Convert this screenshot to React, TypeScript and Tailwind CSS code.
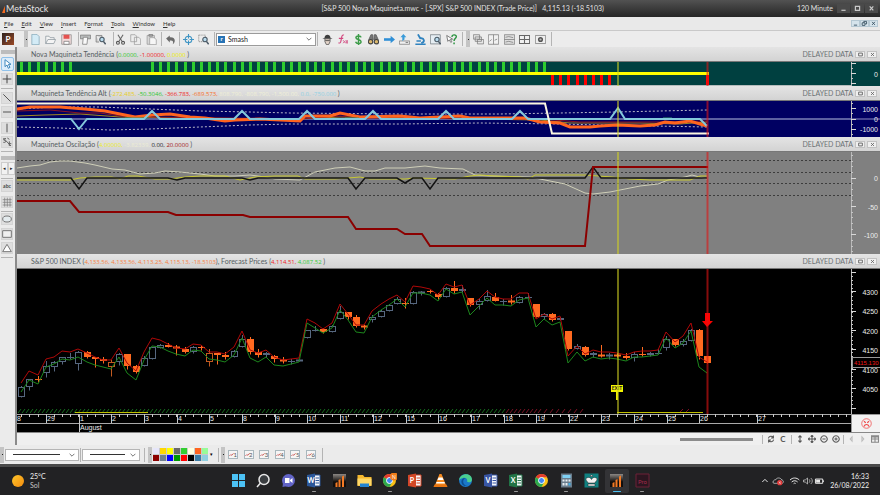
import React from 'react';

type Pt = [number, number];

const STEP = 8.167;
const barX = (i: number) => 21.3 + i * STEP;
const toPoints = (pts: Pt[]) => pts.map((p) => p.join(',')).join(' ');
const range = (from: number, to: number) => Array.from({ length: to - from + 1 }, (_, i) => from + i);

// kind, body top, body bottom, wick top, wick bottom
// b = up bar, f = down bar, h = hollow down bar
type Candle = ['b' | 'f' | 'h', number, number, number, number];

const candles: Candle[] = [
  ['b', 387, 397, 386, 397], ['b', 379, 387, 379, 390], ['f', 379, 379, 376, 382], ['b', 366, 373, 361, 377],
  ['b', 362, 367, 361, 371], ['b', 357, 362, 357, 364], ['b', 357, 357, 353, 359], ['b', 352, 364, 351, 370],
  ['f', 352, 357, 351, 358], ['f', 357, 359, 357, 367], ['f', 359, 361, 357, 363], ['h', 362, 367, 360, 376],
  ['b', 354, 362, 353, 365], ['f', 354, 366, 354, 369], ['f', 366, 372, 365, 373], ['b', 358, 366, 356, 366],
  ['b', 347, 359, 347, 359], ['b', 345, 348, 344, 348], ['f', 345, 347, 343, 347], ['f', 347, 348, 345, 355],
  ['f', 349, 352, 347, 353], ['b', 347, 352, 346, 353], ['f', 347, 347, 345, 350], ['h', 353, 362, 349, 366],
  ['f', 353, 355, 353, 364], ['f', 355, 357, 352, 359], ['b', 351, 357, 350, 357], ['b', 339, 347, 335, 347],
  ['f', 339, 352, 337, 354], ['f', 352, 355, 349, 357], ['b', 353, 355, 352, 357], ['f', 356, 359, 355, 362],
  ['f', 360, 361, 357, 363], ['b', 361, 361, 359, 364], ['b', 360, 361, 359, 361], ['b', 330, 338, 330, 338],
  ['b', 330, 330, 326, 331], ['f', 329, 332, 328, 333], ['b', 326, 332, 325, 332], ['b', 312, 319, 306, 319],
  ['f', 312, 317, 312, 319], ['f', 317, 326, 315, 327], ['f', 326, 327, 325, 329], ['b', 317, 320, 315, 322],
  ['b', 311, 317, 310, 317], ['b', 305, 311, 304, 311], ['b', 299, 304, 297, 304], ['f', 303, 303, 298, 308],
  ['b', 292, 304, 291, 304], ['b', 292, 293, 291, 295], ['f', 291, 291, 290, 293], ['f', 294, 297, 293, 299],
  ['b', 288, 297, 287, 297], ['f', 288, 291, 281, 293], ['b', 289, 291, 285, 292], ['f', 298, 305, 298, 306],
  ['b', 301, 305, 299, 309], ['b', 296, 301, 290, 301], ['f', 297, 301, 293, 301], ['b', 301, 301, 299, 305],
  ['f', 301, 302, 295, 304], ['b', 297, 303, 296, 303], ['b', 297, 297, 293, 298], ['f', 304, 317, 304, 317],
  ['b', 314, 317, 313, 319], ['f', 314, 320, 313, 321], ['b', 318, 320, 317, 320], ['f', 331, 349, 331, 350],
  ['b', 346, 349, 344, 349], ['f', 347, 355, 346, 356], ['b', 353, 355, 352, 357], ['f', 355, 356, 345, 357],
  ['b', 355, 356, 353, 359], ['f', 355, 356, 353, 357], ['f', 356, 358, 353, 359], ['b', 354, 358, 352, 361],
  ['f', 354, 354, 347, 356], ['b', 353, 355, 352, 356], ['b', 353, 353, 349, 354], ['b', 339, 348, 336, 350],
  ['f', 339, 345, 339, 346], ['b', 341, 345, 339, 346], ['b', 330, 341, 329, 341], ['f', 330, 356, 329, 359],
  ['f', 356, 363, 356, 363],
];

const forecastHigh = [
  383, 371, 375, 359, 357, 351, 352, 349, 353, 357, 360, 360, 348, 363, 371, 352, 338, 340, 344, 348, 349, 344, 345,
  352, 352, 354, 347, 331, 350, 353, 350, 357, 360, 359, 358, 319, 323, 329, 323, 304, 314, 325, 325, 311, 304, 299,
  295, 302, 286, 287, 289, 295, 284, 287, 285, 305, 299, 291, 297, 299, 299, 293, 293, 319, 314, 319, 316, 356, 346,
  354, 350, 352, 352, 353, 355, 352, 351, 351, 350, 332, 342, 336, 323, 357, 362,
];

const forecastLow = [
  392, 380, 384, 367, 364, 359, 360, 357, 362, 365, 367, 369, 357, 373, 380, 360, 346, 347, 351, 354, 356, 350, 351,
  359, 360, 362, 355, 338, 358, 362, 357, 365, 366, 364, 362, 323, 328, 333, 328, 310, 320, 332, 333, 317, 310, 305,
  299, 307, 293, 293, 295, 301, 289, 294, 292, 315, 306, 298, 305, 305, 306, 300, 298, 327, 319, 325, 322, 363, 352,
  361, 357, 359, 358, 359, 361, 357, 357, 356, 355, 338, 348, 343, 331, 367, 373,
];

const bars = (ys: number[]): Pt[] => ys.map((y, i) => [Math.round(barX(i)), y]);

const altThick: Pt[] = [
  [17, 109], [30, 107], [60, 107], [85, 109], [105, 111], [120, 114], [135, 117], [152, 115], [170, 114], [190, 117],
  [205, 118], [225, 121], [235, 120], [260, 119], [300, 121], [305, 116], [330, 116], [340, 113], [360, 117],
  [400, 116], [420, 118], [440, 117], [460, 116], [470, 118], [525, 118], [540, 122], [560, 123], [570, 127],
  [590, 127], [600, 126], [617, 125], [640, 126], [655, 125], [665, 122], [675, 123], [690, 121], [700, 124], [707, 126],
];
const altRed: Pt[] = [
  [17, 111], [50, 110], [80, 113], [100, 113], [120, 116], [150, 117], [300, 119], [340, 116], [360, 118], [540, 119],
  [580, 122], [620, 122], [660, 122], [707, 121],
];
const altGold: Pt[] = [
  [17, 116], [45, 115], [80, 114], [120, 117], [180, 118], [300, 119], [340, 117], [540, 120], [570, 123], [640, 123],
  [680, 124], [707, 122],
];
const altUpper: Pt[] = [
  [17, 109], [55, 107], [100, 107], [150, 109], [200, 111], [250, 112], [290, 113], [400, 114], [500, 114], [560, 113],
  [617, 112], [660, 111], [707, 110],
];
const altLower: Pt[] = [
  [17, 127], [60, 128], [110, 130], [150, 129], [200, 127], [250, 125], [290, 124], [400, 124], [480, 123], [560, 124],
  [600, 125], [707, 127],
];
const altPeaks = [152, 242, 307, 373, 446, 520];
const altSignal: Pt[] = [
  [17, 119], [71, 119], [79, 129], [87, 119],
  ...altPeaks.flatMap((x): Pt[] => [[x - 8, 119], [x, 111], [x + 8, 119]]),
  [610, 119], [618, 108], [625, 119], [700, 119], [707, 126],
];

const oscCream: Pt[] = [
  [17, 168], [30, 166], [40, 165], [50, 162], [60, 161], [70, 161], [85, 163], [95, 165], [112, 169], [125, 170],
  [140, 174], [155, 173], [165, 171], [180, 172], [200, 174], [215, 176], [235, 176], [250, 175], [265, 177],
  [275, 179], [300, 180], [315, 172], [335, 168], [350, 167], [365, 171], [375, 171], [385, 168], [405, 168],
  [425, 166], [440, 168], [463, 169], [475, 175], [490, 176], [530, 177], [550, 181], [565, 184], [585, 193],
  [593, 194], [610, 192], [625, 189], [640, 186], [658, 184], [668, 180], [685, 177], [692, 175], [707, 179],
];
const oscYellow: Pt[] = [
  [17, 180], [70, 180], [80, 178], [95, 177], [112, 177], [120, 179], [128, 176], [138, 176], [155, 179], [170, 179],
  [185, 177], [200, 176], [225, 176], [240, 180], [255, 177], [275, 176], [298, 176], [305, 179], [320, 179],
  [335, 179], [348, 178], [360, 177], [370, 179], [405, 179], [415, 178], [455, 179], [470, 176], [480, 175],
  [495, 176], [520, 177], [528, 179], [535, 175], [585, 175], [612, 177], [630, 179], [650, 180], [690, 180],
  [700, 176], [707, 176],
];
const oscBlack: Pt[] = [
  [17, 178], [71, 178], [79, 189], [87, 178], [168, 178], [177, 180], [185, 178], [242, 178], [250, 180], [258, 178],
  [348, 178], [356, 189], [365, 178], [397, 178], [405, 183], [413, 178], [422, 178], [430, 189], [438, 178],
  [585, 178], [593, 167], [601, 178], [707, 178],
];
const oscRed: Pt[] = [
  [17, 201], [70, 201], [79, 212], [168, 212], [176, 215], [243, 215], [250, 217], [348, 217], [356, 229], [397, 229],
  [405, 234], [422, 234], [430, 246], [585, 246], [593, 167], [708, 167],
];

const dates: [number, string][] = [
  [46, '29'], [79, '1'], [111, '2'], [144, '3'], [177, '4'], [209, '5'], [242, '8'], [275, '9'], [307, '10'],
  [340, '11'], [373, '12'], [406, '15'], [438, '16'], [471, '17'], [504, '18'], [536, '19'], [569, '22'], [601, '23'],
  [634, '24'], [667, '25'], [699, '26'], [757, '27'],
];

const menus = ['File', 'Edit', 'View', 'Insert', 'Format', 'Tools', 'Window', 'Help'];

/* ---------- icons, drawn on a 30 unit grid ---------- */

function Icon({ children, className = 'w-[10px] h-[10px]' }: { children: React.ReactNode; className?: string }) {
  return (
    <svg viewBox="0 0 30 30" className={className} fill="none" stroke="#777" strokeWidth="2" aria-hidden="true">
      {children}
    </svg>
  );
}

const lens = (
  <>
    <circle cx="19" cy="15" r="6" fill="#b9dcef" stroke="#4b5a66" strokeWidth="3" />
    <path d="M23 20l6 8" stroke="#4b5a66" strokeWidth="4" />
  </>
);

const fileIcons = {
  New: <path d="M5 1h14l6 6v22H5z" fill="#d3ebf6" stroke="#7fa3b5" />,
  Open: <path d="M2 26V6h9l3 4h11v5M2 26l6-11h21l-5 11z" fill="#f4f4f4" stroke="#8a969c" />,
  Save: (
    <>
      <path d="M2 2h26v26H2z" fill="#f1dada" stroke="#8d8d8d" />
      <path d="M7 2h16v11H7z" fill="#e4524f" stroke="none" />
      <path d="M8 20h14v8H8z" fill="#fff" />
    </>
  ),
};
const printIcons = {
  Print: (
    <>
      <path d="M1 3h28v10H1z" fill="#b9bcbc" />
      <path d="M9 9h12l-2 19H7z" fill="#fafafa" />
    </>
  ),
  'Print preview': (
    <>
      <path d="M3 4h16v8M3 4v18h8" fill="#d0d0d0" />
      {lens}
    </>
  ),
};
const editIcons = {
  Cut: (
    <>
      <path d="M8 2l11 18M22 2L11 20" stroke="#666" strokeWidth="3" />
      <circle cx="8" cy="24" r="4" stroke="#555" strokeWidth="3" />
      <circle cx="22" cy="24" r="4" stroke="#555" strokeWidth="3" />
    </>
  ),
  Copy: <path d="M2 2h12l4 4v15H2zM12 9h12l5 5v15H12z" fill="#ededed" stroke="#999" />,
  Paste: (
    <>
      <path d="M3 4h20v24H3z" fill="#d7d7d7" stroke="#999" />
      <path d="M8 1h10v5H8z" fill="#aaa" />
      <path d="M10 10h12l6 5v14H10z" fill="#f6f6f6" stroke="#999" />
    </>
  ),
};
const undoIcons = {
  Undo: <path d="M3 12L13 4v5c16-2 17 14 8 19 3-7 1-11-8-10v5z" fill="#6b6b6b" stroke="none" />,
};
const zoomIcons = {
  Crosshair: (
    <>
      <circle cx="15" cy="15" r="9" stroke="#3e94c4" strokeWidth="3" />
      <path d="M15 0v12M15 18v12M0 15h12M18 15h12" stroke="#3e94c4" strokeWidth="3" />
    </>
  ),
  'Zoom box': (
    <>
      <path d="M2 3h18v18H2z" strokeDasharray="3 2" />
      {lens}
    </>
  ),
};
const powerIcons = {
  Expert: (
    <>
      <path d="M7 10C7-1 23-1 23 10l6 3H1z" fill="#3d3d3d" stroke="none" />
      <path d="M8 13h14v8l-4 8h-6l-4-8z" fill="#e2d3c8" stroke="#444" />
      <path d="M9 18h12" stroke="#333" />
    </>
  ),
  Indicators: (
    <>
      <path d="M19 3c-5-2-6 3-7 9-1 8-2 15-8 12M5 12h12" stroke="#d2487f" strokeWidth="3" />
      <path d="M16 18c3-3 5 9 8 6M24 18l-8 7M26 18h3v7h-3z" stroke="#d2487f" strokeWidth="2" />
    </>
  ),
  System: (
    <path d="M22 9C21 4 8 4 8 10s14 4 14 11-13 6-15 0M15 0v30" stroke="#3d9c49" strokeWidth="4" />
  ),
  Explorer: (
    <>
      <path d="M8 2h5l1 14H2zM17 2h5l6 14H16z" fill="#777" stroke="#555" />
      <circle cx="7" cy="21" r="6" fill="#dcb96d" stroke="#444" strokeWidth="3" />
      <circle cx="23" cy="21" r="6" fill="#dcb96d" stroke="#444" strokeWidth="3" />
    </>
  ),
  Forecast: (
    <>
      <path d="M0 15h20" stroke="#2f8fd6" strokeWidth="7" />
      <path d="M18 5l12 10-12 10z" fill="#2f8fd6" stroke="none" />
    </>
  ),
  Import: (
    <>
      <path d="M1 19h28v9H1z" fill="#f1f1f1" />
      <path d="M18 23h7" stroke="#555" />
      <path d="M9 19V9H4l8-9 8 9h-5v6z" fill="#3a9bd9" stroke="none" />
    </>
  ),
  Optimise: (
    <>
      <path d="M8 1l7 12M14 12c12-2 14 10 3 13" stroke="#3083bf" strokeWidth="5" />
      <path d="M1 28h28M4 19h12" stroke="#3083bf" strokeWidth="4" />
    </>
  ),
  Inspect: (
    <>
      <path d="M1 2h27v25H1z" fill="#e6eef3" stroke="#6d767b" />
      {lens}
    </>
  ),
  Help: (
    <>
      <path d="M2 4l3 16 4-4 4 7 3-2-4-6 6-1z" fill="#fff" stroke="#555" />
      <path d="M16 8c1-8 13-7 12 0-1 5-6 4-6 11M22 23v5" stroke="#2e9443" strokeWidth="4" />
    </>
  ),
};
const tileIcons = {
  Cascade: <path d="M1 2h17v12H1zM6 8h17v12H6zM12 15h17v12H12z" fill="#e7e7e7" stroke="#777" />,
  'Tile columns': <path d="M1 2h28v26H1zM15 2v26M4 20l6-5M18 17l7-3" fill="#f1f1f1" stroke="#777" />,
  'Tile rows': <path d="M1 2h28v26H1zM1 15h28M4 9l9-2 12 3M4 22l9-2 12 3" fill="#dedede" stroke="#777" />,
  'Tile grid': <path d="M1 4h28v22H1zM15 4v22M1 15h28" fill="#f1f1f1" stroke="#666" strokeWidth="3" />,
  'Layout options': (
    <>
      <path d="M1 4h28v22H1z" fill="#eee" stroke="#777" />
      <circle cx="15" cy="15" r="5" fill="#bbb" stroke="#555" strokeWidth="4" />
    </>
  ),
};

function IconGroup({ icons, className }: { icons: Record<string, React.ReactNode>; className: string }) {
  return (
    <div className={`flex shrink-0 items-center justify-between ${className}`}>
      {Object.entries(icons).map(([name, art]) => (
        <button key={name} type="button" aria-label={name} className="flex h-3 w-3 items-center justify-center">
          <Icon className="h-[11px] w-[11px]">{art}</Icon>
        </button>
      ))}
    </div>
  );
}

const Sep = ({ className = 'h-[14px]' }: { className?: string }) => (
  <div className={`w-px shrink-0 bg-[#b4b4b4] ${className}`} />
);
const Grip = ({ className = '' }: { className?: string }) => (
  <div className={`flex h-4 w-1 shrink-0 items-center justify-center bg-[#c4c4c4] ${className}`}>
    <div className="h-px w-px bg-[#222]" />
  </div>
);

/* ---------- window frame ---------- */

function TitleBar() {
  return (
    <header className="flex h-[17px] items-center bg-linear-to-b from-[#525252] to-[#262626] pl-[2px] text-[7px] text-[#e2e2e2]">
      <svg viewBox="0 0 12 24" className="h-[8px] w-[4px]" aria-hidden="true">
        <path d="M0 24L9 2v22z" fill="#f26a21" />
      </svg>
      <span className="text-[9px] leading-none">MetaStock</span>
      <h1 className="flex-1 whitespace-pre pl-[80px] text-center">
        [S&amp;P 500 Nova Maquineta.mwc - [.SPX] S&amp;P 500 INDEX (Trade Price)]{'   '}4,115.13 (-18.5103)
      </h1>
      <span>120 Minute</span>
      <div className="ml-1 mr-[2px] flex gap-px">
        {['M8 21h14', 'M8 8h14v13H8z', 'M9 8l12 13M21 8L9 21'].map((d, i) => (
          <button
            key={d}
            type="button"
            aria-label={['Minimise', 'Maximise', 'Close'][i]}
            className="flex h-[9px] w-[13px] items-center justify-center bg-[#4a4a4a]"
          >
            <svg viewBox="0 0 30 30" className="h-[9px] w-[9px]" aria-hidden="true">
              <path d={d} fill="none" stroke="#c9c9c9" strokeWidth="4" />
            </svg>
          </button>
        ))}
      </div>
    </header>
  );
}

function MenuBar() {
  return (
    <nav className="flex h-[13px] items-center justify-between bg-[#e9e9e9] pl-1 pr-[2px] text-[6px] text-[#333]">
      <div className="flex gap-2">
        {menus.map((m) => {
          const at = m === 'Format' ? 1 : 0;
          return (
            <button key={m} type="button" className="leading-none">
              {m.slice(0, at)}
              <span className="underline">{m[at]}</span>
              {m.slice(at + 1)}
            </button>
          );
        })}
      </div>
      <div className="flex">
        {['M8 22h14', 'M5 12h12v11H5zM12 12V6h12v11h-6', 'M9 8l12 13M21 8L9 21'].map((d, i) => (
          <button
            key={d}
            type="button"
            aria-label={['Minimise chart', 'Restore chart', 'Close chart'][i]}
            className="flex h-[7px] w-[9px] items-center justify-center border border-[#b5c8d3] bg-[#d5e3eb]"
          >
            <svg viewBox="0 0 30 30" className="h-[7px] w-[7px] shrink-0" aria-hidden="true">
              <path d={d} fill="none" stroke="#3c5565" strokeWidth="4" />
            </svg>
          </button>
        ))}
      </div>
    </nav>
  );
}

const Chevron = () => (
  <svg viewBox="0 0 10 10" className="pointer-events-none absolute right-1 top-[3px] h-[6px] w-[6px]" aria-hidden="true">
    <path d="M1 3l4 4 4-4" fill="none" stroke="#666" strokeWidth="1.5" />
  </svg>
);

function Toolbar() {
  return (
    <div className="flex h-[17px] items-center overflow-hidden border-t border-[#c9c9c9] bg-[#ececec]">
      <button type="button" aria-label="Power console" className="ml-[2px] h-3 w-3 shrink-0 bg-linear-to-br from-[#2e211c] to-[#9d4a25] text-[8px] font-bold leading-none text-white">
        P
      </button>
      <Grip className="ml-[10px]" />
      <IconGroup icons={fileIcons} className="ml-px w-[43px]" />
      <Sep className="ml-[6px] h-[14px]" />
      <IconGroup icons={printIcons} className="w-[27px]" />
      <Sep className="ml-[7px] h-[14px]" />
      <IconGroup icons={editIcons} className="w-[43px]" />
      <Sep className="ml-1 h-[14px]" />
      <IconGroup icons={undoIcons} className="ml-[2px] w-3" />
      <Sep className="ml-[3px] h-[14px]" />
      <IconGroup icons={zoomIcons} className="ml-[2px] w-[27px]" />
      <Sep className="ml-[5px] h-[14px]" />
      <div className="relative ml-px h-[13px] w-[100px] shrink-0">
        <select aria-label="Template" className="block h-[13px] w-full appearance-none border border-[#9b9b9b] bg-white py-0 pl-[11px] text-[7px] leading-[11px] text-[#222]">
          <option>Smash</option>
        </select>
        <span className="pointer-events-none absolute left-[2px] top-[3px] flex h-[7px] w-[7px] items-center justify-center bg-[#2773b5] text-[6px] font-bold leading-none text-white">
          r
        </span>
        <Chevron />
      </div>
      <Sep className="ml-px h-[14px]" />
      <IconGroup icons={powerIcons} className="ml-[3px] w-[136px]" />
      <Sep className="ml-[5px] h-[14px]" />
      <Grip className="ml-[3px]" />
      <IconGroup icons={tileIcons} className="ml-[2px] w-[74px]" />
      <Sep className="ml-[5px] h-[14px]" />
    </div>
  );
}

function Tool({ name, children, className = 'mt-1' }: { name: string; children: React.ReactNode; className?: string }) {
  return (
    <button type="button" aria-label={name} className={`flex h-3 w-3 shrink-0 items-center justify-center border border-[#d4d4d4] bg-[#dedede] ${className}`}>
      <Icon>{children}</Icon>
    </button>
  );
}

function SideBar() {
  const rule = <div className="mt-[3px] h-px w-3 shrink-0 bg-[#b4b4b4]" />;
  return (
    <aside className="flex w-[17px] shrink-0 flex-col border-r-2 border-r-[#8a8a8a] bg-[#ebebeb] pl-px">
      <div className="mt-[3px] h-[4px] w-full shrink-0 bg-[#bdbdbd]" />
      <button type="button" aria-label="Select" className="mt-[3px] flex h-[14px] w-[13px] shrink-0 items-center justify-center rounded-xs border border-[#8fc1ea] bg-[#dcedfb]">
        <Icon>
          <path d="M6 2v21l6-5 4 10 5-3-5-9h8z" fill="#fff" stroke="#3f87bd" strokeWidth="3" />
        </Icon>
      </button>
      <Tool name="Pan" className="mt-[2px]"><path d="M15 2v26M2 15h26" stroke="#444" strokeWidth="3" /></Tool>
      {rule}
      <Tool name="Trend line" className="mt-[3px]"><path d="M4 4l22 22" stroke="#555" strokeWidth="3" /></Tool>
      <Tool name="Horizontal line" className="mt-[2px]"><path d="M3 15h24" stroke="#555" strokeWidth="3" /></Tool>
      <Tool name="Vertical line"><path d="M15 2v26" stroke="#555" strokeWidth="3" /></Tool>
      <Tool name="Symbols" className="mt-[2px]">
        <path d="M4 3l23 24M12 5c-8-2-9 5-4 6s4 7-4 5M18 20h10M22 13v14M16 3l6 4" stroke="#666" strokeWidth="3" />
      </Tool>
      {rule}
      <div className="mt-1 h-[4px] w-full shrink-0 bg-[#bdbdbd]" />
      <div className="mt-[2px] flex h-[13px] shrink-0 text-[5px] leading-none text-[#222]">
        <button type="button" aria-label="Previous" className="w-[7px] border border-[#cdcdcd] bg-[#f2f2f2]">◂</button>
        <button type="button" aria-label="Next" className="w-[7px] border border-[#cdcdcd] bg-[#f2f2f2]">▸</button>
      </div>
      {rule}
      <button type="button" className="mt-px h-3 w-3 shrink-0 border border-[#d4d4d4] bg-[#dedede] text-center text-[5px] font-bold leading-none text-[#444]">
        abc
      </button>
      <Tool name="Grid"><path d="M2 8h27M2 16h27M2 24h27M8 2v27M16 2v27M24 2v27" /></Tool>
      {rule}
      <Tool name="Ellipse" className="mt-px"><ellipse cx="15" cy="15" rx="13" ry="9" fill="#e4ebee" strokeWidth="3" /></Tool>
      <Tool name="Rectangle" className="mt-[3px]"><path d="M2 5h26v20H2z" fill="#efefef" strokeWidth="3" /></Tool>
      <Tool name="Triangle" className="mt-[2px]"><path d="M15 4l13 22H2z" fill="#fff" strokeWidth="3" /></Tool>
      {rule}
    </aside>
  );
}

/* ---------- chart panes ---------- */

type PaneProps = {
  name: string;
  values: [string, string][];
  extra?: React.ReactNode;
  bg: string;
  top: number;
  height: string;
  axis: React.ReactNode;
  children: React.ReactNode;
};

const Value = ({ text, color }: { text: string; color: string }) => (
  <span className="font-['Open_Sans','Lato',sans-serif] text-[6px]" style={{ color }}>{text}</span>
);

function Pane({ name, values, extra, bg, top, height, axis, children }: PaneProps) {
  return (
    <section>
      <div className="flex h-[15px] items-center border-b border-b-[#777] bg-linear-to-b from-[#e4e4e4] to-[#d3d3d3] pl-[14px] pr-[3px] text-[7px] text-[#555d62]">
        <h2 className="whitespace-pre">
          {name} ({values.map(([text, color]) => <Value key={text + color} text={text} color={color} />)}){extra}
        </h2>
        <span className="ml-auto text-[#6c7275]">DELAYED DATA</span>
        {['M7 9h16v12H7z', 'M9 9l12 12M21 9L9 21'].map((d, i) => (
          <button
            key={d}
            type="button"
            aria-label={i ? 'Close pane' : 'Maximise pane'}
            className="ml-[2px] flex h-[7px] w-[10px] items-center justify-center border border-[#c2c2c2] bg-[#efefef]"
          >
            <svg viewBox="0 0 30 30" className="h-[7px] w-[7px] shrink-0" aria-hidden="true">
              <path d={d} fill="none" stroke="#666" strokeWidth="4" />
            </svg>
          </button>
        ))}
      </div>
      <div className={`flex ${bg} ${height}`}>
        <svg className="h-full min-w-0 flex-1" role="img" aria-label={name}>
          <g transform={`translate(-17 ${-top})`} fill="none">
            {children}
            <path d={`M618 ${top}v160`} stroke="#d0d020" strokeWidth="2" opacity="0.55" />
            <path d={`M707.5 ${top}v160`} stroke="#e01414" strokeWidth="2" opacity="0.6" />
          </g>
        </svg>
        <svg className="h-full w-[29px] shrink-0" fontFamily="Liberation Sans, Arial, sans-serif" fontSize="7">
          <g transform={`translate(-851 ${-top})`}>
            <path d={`M851.5 ${top}v160`} stroke="#b9b9b9" strokeWidth="1" />
            {axis}
          </g>
        </svg>
      </div>
    </section>
  );
}

function Scale({ major, minor, labels }: { major: number[]; minor: number[]; labels: [number, string][] }) {
  return (
    <>
      {minor.map((y) => <path key={y} d={`M851 ${y + 0.5}h2`} stroke="#c4c4c4" />)}
      {major.map((y) => <path key={y} d={`M851 ${y + 0.5}h5`} stroke="#d8d8d8" />)}
      {labels.map(([y, text]) => (
        <text key={text} x="878" y={y + 3} textAnchor="end" fill="#ececec">{text}</text>
      ))}
    </>
  );
}

function TrendPane() {
  return (
    <Pane
      name="Nova Maquineta Tendência"
      values={[['0.0000, ', '#2fc72f'], ['-1.00000, ', '#f01a1a'], ['0.0000 ', '#f0f000']]}
      bg="bg-[#004040]"
      top={62}
      height="h-[24px]"
      axis={<Scale major={[63, 73, 83]} minor={[68, 78]} labels={[[74, '0']]} />}
    >
      {[...range(0, 6), ...range(16, 64)].map((i) => (
        <rect key={i} x={Math.round(barX(i)) - 1} y="62" width="3" height="10" fill="#2ecc2e" />
      ))}
      {[...range(65, 72), 84].map((i) => (
        <rect key={i} x={Math.round(barX(i)) - 1} y="75" width="3" height="10" fill="#ff0000" />
      ))}
      <path d="M17 73.5H709" stroke="#ffff00" strokeWidth="3" />
      <path d="M17 85.5h1400" stroke="#b5bcbc" />
    </Pane>
  );
}

function AltPane() {
  return (
    <Pane
      name="Maquineta Tendência Alt"
      values={[
        ['-272.485, ', '#e8cf1c'], ['-50.3046, ', '#2fc72f'], ['-366.783, ', '#f01a1a'], ['-689.573, ', '#f7702b'],
        ['808.790, ', '#efefd6'], ['-808.790, ', '#f0f0d7'], ['-1,500.00, ', '#f1f1d8'], ['0.0, ', '#8fd0e2'],
        ['-750.000 ', '#90d1e3'],
      ]}
      bg="bg-[#000062]"
      top={101}
      height="h-9"
      axis={
        <>
          <path d="M851 119h29" stroke="#8d8dc0" />
          <Scale major={[108, 119, 129]} minor={[103, 113, 124, 134]} labels={[[109, '1000'], [119, '0'], [129, '-1000']]} />
        </>
      }
    >
      <path d="M17 119h1400" stroke="#b9c2e0" />
      <polyline points={toPoints(altUpper)} stroke="#b8b8c8" strokeDasharray="2 2" />
      <polyline points={toPoints(altLower)} stroke="#b8b8c8" strokeDasharray="2 2" />
      <polyline points={toPoints(altGold)} stroke="#a08a20" />
      <polyline points={toPoints(altRed)} stroke="#8c1420" />
      <polyline points={toPoints(altThick)} stroke="#ff6420" strokeWidth="3" />
      <path d="M125 118h24M345 118h14M565 119h20M663 118h9" stroke="#2f9a6a" />
      <polyline points={toPoints(altSignal)} stroke="#84c8dc" strokeWidth="2" />
      <path d="M17 103.5H545l7 30H709" stroke="#fbf6e0" strokeWidth="2" />
    </Pane>
  );
}

function OscillatorPane() {
  return (
    <Pane
      name="Maquineta Oscilação"
      values={[['4.00000, ', '#eded1d'], ['-3.82339, ', '#ececd4'], ['0.00, ', '#222'], ['20.0000 ', '#a31515']]}
      bg="bg-[#808080]"
      top={152}
      height="h-[102px]"
      axis={
        <Scale
          major={[178, 206, 234]}
          minor={[155, 161, 166, 172, 183, 189, 195, 200, 212, 217, 223, 229, 240, 246, 251]}
          labels={[[178, '0'], [207, '-50'], [235, '-100']]}
        />
      }
    >
      {[160, 172, 183, 195].map((y) => (
        <path key={y} d={`M17 ${y + 0.5}h1400`} stroke="#3c3c3c" strokeDasharray="2 2" />
      ))}
      <polyline points={toPoints(oscCream)} stroke="#cfcfb8" />
      <polyline points={toPoints(oscYellow)} stroke="#c8c832" />
      <polyline points={toPoints(oscBlack)} stroke="#141414" strokeWidth="1.5" />
      <polyline points={toPoints(oscRed)} stroke="#8b0000" strokeWidth="2" />
    </Pane>
  );
}

function CandleMark({ index, candle }: { index: number; candle: Candle }) {
  const [kind, top, bottom, high, low] = candle;
  const x = Math.round(barX(index));
  const color = kind === 'b' ? '#56677f' : kind === 'f' ? '#ff6a20' : '#c25a20';
  return (
    <g stroke={color}>
      <path d={`M${x + 0.5} ${high}V${top}M${x + 0.5} ${bottom}V${low + 0.5}`} />
      {bottom - top < 2 ? (
        <path d={`M${x - 3} ${top + 0.5}h7`} strokeWidth={bottom > top ? 2 : 1} />
      ) : (
        <rect x={x - 2.5} y={top + 0.5} width="6" height={bottom - top - 1} fill={kind === 'f' ? color : 'none'} />
      )}
    </g>
  );
}

function PricePane() {
  return (
    <Pane
      name="S&P 500 INDEX"
      values={[
        ['4,133.56, ', '#f7803f'], ['4,133.56, ', '#f78040'], ['4,113.25, ', '#f78041'], ['4,115.13, ', '#f78042'],
        ['-18.5103', '#f78043'],
      ]}
      extra={
        <>
          , Forecast Prices (<Value text="4,114.51, " color="#ee2424" />
          <Value text="4,087.52 " color="#35c935" />)
        </>
      }
      bg="bg-black"
      top={269}
      height="h-[145px]"
      axis={
        <>
          <Scale
            major={[272, 291, 311, 330, 349, 369, 388, 408]}
            minor={range(0, 34).map((i) => 272 + i * 4)}
            labels={[[292, '4300'], [311, '4250'], [331, '4200'], [350, '4150'], [370, '4100'], [389, '4050']]}
          />
          <rect x="852.5" y="357.5" width="29" height="10" fill="#000" stroke="#999" />
          <text x="854" y="365" fontSize="6" fill="#f01818">4115.130</text>
        </>
      }
    >
      {range(0, 64).map((i) => (
        <path key={i} d={`M${18 + i * 8} 413l3-4m1 4l3-4`} stroke={i > 60 ? '#7a1224' : '#156b1e'} />
      ))}
      <path d="M538 413l3-4m3 4l3-4m3 4l3-4m3 4l3-4m3 4l3-4m3 4l3-4m3 4l3-4m3 4l3-4m96 4l4-4m2 4l4-4" stroke="#7a1224" />
      <path d="M75 412.5h73M617 412.5h86" stroke="#c0c000" strokeWidth="1" />
      {candles.map((c, i) => <CandleMark key={i} index={i} candle={c} />)}
      <polyline points={toPoints(bars(forecastHigh))} stroke="#b00808" />
      <polyline points={toPoints(bars(forecastLow))} stroke="#1c861c" />
      <path d="M705 313h5v8h3l-6 6-5-6h3z" fill="#ff0000" />
      <path d="M617 391v9" stroke="#f0f000" strokeWidth="2" />
      <rect x="611" y="385" width="12" height="7" fill="#f5f500" />
      <text x="617" y="390" textAnchor="middle" fontSize="5" fontWeight="700" fill="#222">EXIT</text>
    </Pane>
  );
}

function DateAxis() {
  return (
    <div className="flex h-[18px] bg-black">
      <svg className="h-full min-w-0 flex-1" fontFamily="Liberation Sans, Arial, sans-serif" fontSize="7" fill="#ececec">
        <g transform="translate(-17 -414)">
          <path d="M17 414.5h1400M17 423.5h1400" stroke="#a9a9a9" />
          {range(0, 101).map((i) => <path key={i} d={`M${Math.round(barX(i)) + 0.5} 414v3`} stroke="#c9c9c9" />)}
          <text x="17" y="421">8</text>
          {dates.map(([x, label]) => (
            <g key={label}>
              <path d={`M${x + 0.5} 414v9`} stroke="#c9c9c9" />
              <text x={x + 1} y="421">{label}</text>
            </g>
          ))}
          <path d="M79.5 414v18" stroke="#c9c9c9" />
          <text x="80" y="430">August</text>
        </g>
      </svg>
      <button type="button" aria-label="Sentiment" className="flex w-[29px] items-center justify-center border-l border-t border-[#999] bg-[#f2f2f2]">
        <svg viewBox="0 0 30 30" className="h-[11px] w-[11px]" fill="none" stroke="#f04545" strokeWidth="2" aria-hidden="true">
          <circle cx="15" cy="15" r="13" />
          <path d="M8 9l5 4M22 9l-5 4M8 23c3-7 11-7 14 0" strokeWidth="3" />
        </svg>
      </button>
    </div>
  );
}

function StatusStrip() {
  const btn = (name: string, d: string, color = '#555') => (
    <button type="button" aria-label={name} className="flex h-2 w-2 items-center justify-center">
      <svg viewBox="0 0 30 30" className="h-2 w-2" fill="none" stroke={color} strokeWidth="4" aria-hidden="true">
        <path d={d} />
      </svg>
    </button>
  );
  return (
    <div className="flex h-[13px] items-center justify-end gap-1 border-t border-[#888] bg-[#efefef] pr-px">
      <div className="mr-[5px] h-[3px] w-[73px] bg-[#8b8b8b]" />
      <Sep className="h-[9px]" />
      {btn('Refresh', 'M5 13C8 2 19 3 23 9M24 2v9h-9M25 17C22 28 11 27 7 21M6 28v-9h9')}
      <button type="button" className="w-2 text-[8px] font-bold leading-none text-[#555]">C</button>
      <Sep className="h-[9px]" />
      {btn('Scale', 'M15 3v24M9 9l6-6 6 6M9 21l6 6 6-6')}
      {btn('Move', 'M15 1v28M1 15h28M10 6l5-5 5 5M10 24l5 5 5-5M6 10l-5 5 5 5M24 10l5 5-5 5')}
      {btn('Zoom out', 'M15 3a12 12 0 1 0 .1 0M9 15h12')}
      {btn('Zoom in', 'M15 3a12 12 0 1 0 .1 0M9 15h12M15 9v12')}
      <Sep className="-mx-px h-[9px]" />
      {btn('Back', 'M19 7l-7 8 7 8z', '#bbb')}
      {btn('Forward', 'M11 7l7 8-7 8z', '#bbb')}
      {btn('Data window', 'M2 3h26v24H2zM2 7h26M2 15h26M15 8v19', '#888')}
    </div>
  );
}

function LineSelect({ label, className, line }: { label: string; className: string; line: string }) {
  return (
    <div className={`relative h-[12px] shrink-0 ${className}`}>
      <select aria-label={label} className="block h-[12px] w-full appearance-none border border-[#b5b5b5] bg-white text-[6px]" />
      <div className={`pointer-events-none absolute left-2 top-[5px] h-px bg-[#333] ${line}`} />
      <Chevron />
    </div>
  );
}

const palette = [
  '#e6e6fa', '#ffd700', '#ffff00', '#696969', '#32cd32', '#ffffe0', '#ff6420', '#98fb98',
  '#8b0000', '#708090', '#0000ff', '#009a00', '#ff0000', '#000000', '#3a7ca5', '#8fcfe0',
];

function DrawBar() {
  return (
    <div className="flex h-[19px] items-center bg-[#ebebeb]">
      <Grip />
      <LineSelect label="Line style" className="ml-px w-[74px]" line="w-[47px]" />
      <Sep className="ml-px h-[14px]" />
      <LineSelect label="Line weight" className="ml-px w-[58px]" line="w-[35px]" />
      <Sep className="ml-1 h-[14px]" />
      <Grip className="ml-[3px]" />
      <div className="ml-px grid grid-cols-8 gap-px bg-[#c9c9c9]">
        {palette.map((c) => (
          <button key={c} type="button" aria-label={c} className="h-[6px] w-[6px]" style={{ backgroundColor: c }} />
        ))}
      </div>
      <button type="button" aria-label="More colours" className="ml-px w-[5px] text-[5px] leading-none text-black">▾</button>
      <Sep className="ml-1 h-[14px]" />
      <Grip className="ml-[2px]" />
      <div className="ml-[3px] flex w-[88px] items-center justify-between">
        {range(1, 6).map((n) => (
          <button key={n} type="button" aria-label={`Template ${n}`} className="relative h-[9px] w-[10px] border border-[#a9b7bd] bg-[#f5f5f5] text-right text-[6px] leading-none text-[#555]">
            <svg viewBox="0 0 30 30" className="absolute left-0 top-0 h-[7px] w-[5px]" aria-hidden="true">
              <path d="M2 24l9-9 6 5 10-12" fill="none" stroke="#c95050" strokeWidth="5" />
            </svg>
            {n}
          </button>
        ))}
      </div>
      <Sep className="ml-[6px] h-[14px]" />
    </div>
  );
}

/* ---------- task bar ---------- */

function OfficeArt({ color, letter }: { color: string; letter: string }) {
  return (
    <>
      <path d="M14 4h14v22H14z" fill="#f4f6fa" stroke={color} strokeWidth="2" />
      <path d="M19 10h7M19 15h7M19 20h7" stroke={color} strokeWidth="2" />
      <path d="M2 4l16-3v28L2 26z" fill={color} />
      <text x="10" y="20" textAnchor="middle" fontSize="14" fontWeight="700" fill="#fff">{letter}</text>
    </>
  );
}

const ChromeArt = () => (
  <>
    <circle cx="15" cy="15" r="13" fill="#fbc116" />
    <path d="M15 15L3.7 8.5A13 13 0 0 1 26.3 8.5H15z" fill="#e33b2e" />
    <path d="M3.7 8.5A13 13 0 0 0 15 28l5.5-10L15 15z" fill="#2da94f" />
    <circle cx="15" cy="15" r="6" fill="#4286f4" stroke="#fff" strokeWidth="2" />
  </>
);

const StockArt = () => (
  <>
    <defs>
      <linearGradient id="steel" x1="0" y1="0" x2="0" y2="1">
        <stop offset="0" stopColor="#8b8784" />
        <stop offset="0.6" stopColor="#120e0c" />
      </linearGradient>
    </defs>
    <path d="M2 2h26v26H2z" fill="url(#steel)" />
    <path d="M7 28v-8l4-2v10zM13 28V14l4-2v16zM20 28V7l4-2v23z" fill="#f47a25" />
  </>
);

const apps: { name: string; art: React.ReactNode; running?: boolean; active?: boolean }[] = [
  { name: 'Start', art: <path d="M2 2h12v12H2zM16 2h12v12H16zM2 16h12v12H2zM16 16h12v12H16z" fill="#4cc2f5" /> },
  { name: 'Search', art: <><circle cx="16" cy="13" r="10" fill="#3a3d40" stroke="#e8e8e8" strokeWidth="3" /><path d="M9 20l-7 8" stroke="#e8e8e8" strokeWidth="3" /></> },
  { name: 'Chat', art: <><circle cx="15" cy="15" r="13" fill="#6264c7" /><path d="M4 20l-1 8 10-2z" fill="#6264c7" /><path d="M8 10h9v10H8zM18 14l5-4v10l-5-4z" fill="#fff" /></> },
  { name: 'Word', art: <OfficeArt color="#2b579a" letter="W" />, running: true },
  { name: 'MetaStock Downloader', art: <StockArt /> },
  { name: 'File Explorer', art: <><path d="M1 4h11l3 4h14v18H1z" fill="#f5b82e" /><path d="M1 11h28v14H1z" fill="#ffd867" /><path d="M6 21h18v7H6z" fill="#2584d0" /></> },
  { name: 'Chrome profile', art: <><ChromeArt /><circle cx="24" cy="7" r="8" fill="#ef7d1a" /><text x="24" y="11" textAnchor="middle" fontSize="10" fill="#fff">N</text></>, running: true },
  { name: 'PowerPoint', art: <OfficeArt color="#d24726" letter="P" /> },
  { name: 'VLC', art: <><path d="M13 2h4l9 22H4z" fill="#f58a1f" /><path d="M11 9h8l2 5H9zM7 18h16l1 3H6z" fill="#fff" /><path d="M3 23h24l2 5H1z" fill="#e87511" /></> },
  { name: 'Edge', art: <><circle cx="15" cy="15" r="13" fill="#1b78c8" /><path d="M2 15C3 0 27-2 28 13c0 6-8 7-10 4 2-5-3-9-8-7-5 1-8 4-8 5z" fill="#4bcf8f" /><path d="M10 11c-7 6-2 17 9 15-7-1-10-7-8-12 1-2 3-3 5-2-2-2-4-2-6-1z" fill="#0c4f93" /></> },
  { name: 'Visio', art: <OfficeArt color="#3955a3" letter="V" /> },
  { name: 'Excel', art: <OfficeArt color="#217346" letter="X" />, running: true },
  { name: 'Chrome', art: <ChromeArt /> },
  { name: 'Calculator', art: <><path d="M4 1h22v28H4z" fill="#6b7d8c" /><path d="M7 4h16v6H7z" fill="#7fd0f3" /><path d="M7 13h4v4H7zM13 13h4v4h-4zM19 13h4v4h-4zM7 20h4v5H7zM13 20h4v5h-4z" fill="#e8eef2" /><path d="M19 20h4v5h-4z" fill="#41b1e8" /></>, running: true },
  { name: 'Chess', art: <><path d="M1 1h28v28H1z" fill="#108080" /><path d="M13 4h4v3h-4zM4 11c5-4 9-2 11 2 2-4 6-6 11-2 1 5-4 6-4 9H8c0-3-5-4-4-9zM8 22h14v4H8z" fill="#f1f1f1" stroke="#222" /></> },
  { name: 'MetaStock', art: <StockArt />, running: true, active: true },
  { name: 'Chart Pro', art: <><path d="M2 2h26v26H2z" fill="#2c1620" stroke="#6d2036" strokeWidth="2" /><text x="15" y="21" textAnchor="middle" fontSize="12" fill="#a12b4b">Pro</text></>, running: true },
];

function TaskBar() {
  return (
    <footer className="grid h-[31px] grid-cols-[1fr_auto_1fr] items-center border-t-3 border-[#4a4a4a] bg-[#222224] text-[7px] leading-[9px] text-[#f0f0f0]">
      <div className="flex items-center gap-[6px] pl-3">
        <div className="h-3 w-3 rounded-full bg-linear-to-br from-[#fdc62a] to-[#f28a0c]" />
        <div>
          <p>25°C</p>
          <p className="text-[#c4c4c4]">Sol</p>
        </div>
      </div>
      <div className="flex w-[428px] justify-between">
        {apps.map((app) => (
          <button
            key={app.name}
            type="button"
            aria-label={app.name}
            className={`flex h-6 w-6 flex-col items-center rounded-xs pt-1 ${app.active ? 'bg-[#333336]' : ''}`}
          >
            <svg viewBox="0 0 30 30" className="h-[15px] w-[15px]" fill="none" aria-hidden="true">{app.art}</svg>
            {app.running && (
              <span className={`mt-[3px] h-px rounded-full ${app.active ? 'w-2 bg-[#4cc2f5]' : 'w-1 bg-[#9a9a9a]'}`} />
            )}
          </button>
        ))}
      </div>
      <div className="flex items-center justify-end gap-1 pr-[11px]">
        <svg viewBox="0 0 200 30" className="h-[10px] w-[66px]" fill="none" stroke="#e8e8e8" strokeWidth="3" aria-hidden="true">
          <path d="M7 18l8-8 8 8" />
          <path d="M42 22h24c7 0 6-10 0-10-3-8-16-8-18-1-9 0-11 10-6 11z" strokeWidth="2" />
          <circle cx="60" cy="20" r="8" fill="#e23a3a" stroke="none" />
          <path d="M57 17l6 6M63 17l-6 6" strokeWidth="2" />
          <path d="M91 12c8-8 20-8 28 0M96 18c5-5 13-5 18 0M102 23c2-2 4-2 6 0" />
          <path d="M132 12h5l7-6v18l-7-6h-5zM149 10c3 3 3 7 0 10M154 6c6 5 6 13 0 18" strokeWidth="2" />
          <path d="M168 9h22v13h-22zM192 13v5" strokeWidth="3" />
          <path d="M170 11h12v9h-12z" fill="#e8e8e8" stroke="none" />
        </svg>
        <div className="text-right">
          <p>16:33</p>
          <p>26/08/2022</p>
        </div>
      </div>
    </footer>
  );
}

export default function App() {
  return (
    <div className="min-h-screen bg-[#efefef] font-['Lato','Open_Sans',sans-serif] leading-none">
      <TitleBar />
      <MenuBar />
      <Toolbar />
      <div className="flex">
        <SideBar />
        <main className="min-w-0 flex-1">
          <TrendPane />
          <AltPane />
          <OscillatorPane />
          <PricePane />
          <DateAxis />
          <StatusStrip />
        </main>
      </div>
      <DrawBar />
      <TaskBar />
    </div>
  );
}
